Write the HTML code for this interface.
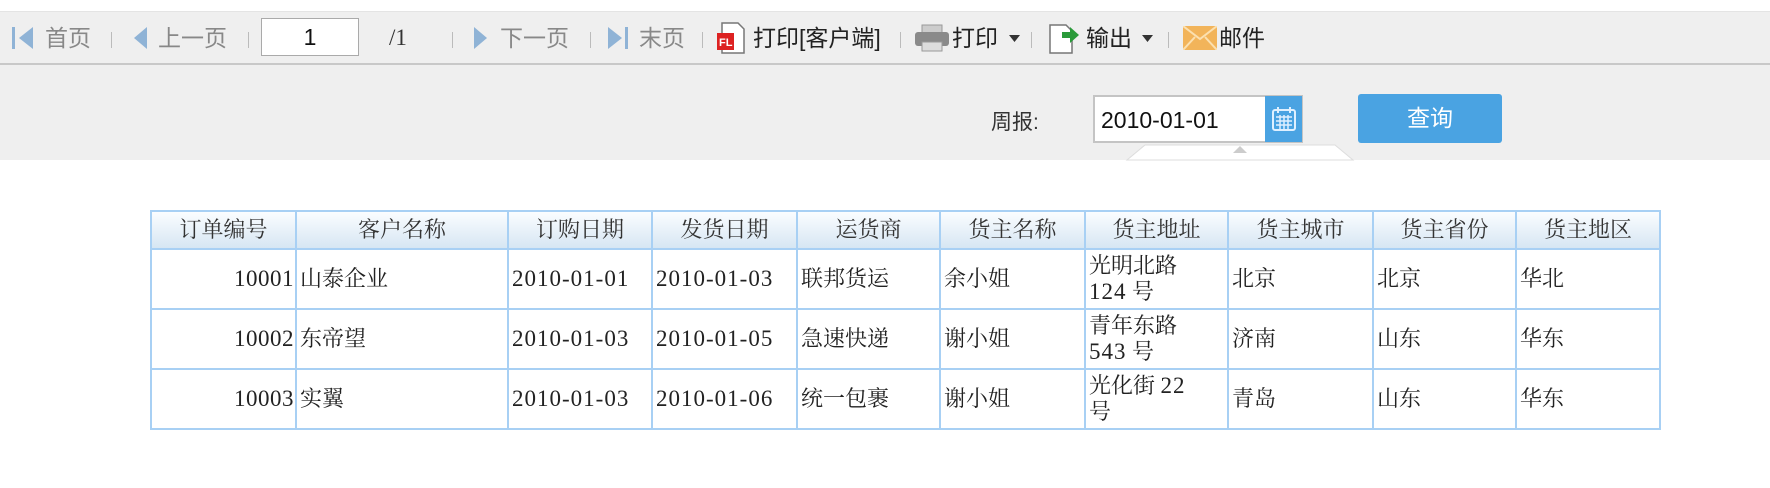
<!DOCTYPE html>
<html><head><meta charset="utf-8">
<style>
*{margin:0;padding:0;box-sizing:border-box}
body{width:1770px;height:488px;background:#fff;position:relative;overflow:hidden;font-family:"Liberation Sans","Noto Sans CJK SC",sans-serif}
.tb{position:absolute;left:0;top:11px;width:1770px;height:54px;background:#efefef;border-top:1px solid #e4e4e4;border-bottom:2px solid #c8c8c8}
.a{position:absolute;font-size:23px;line-height:24px;top:26px;color:#888}
.d{color:#222}
.sep{position:absolute;top:32px;width:1px;height:16px;background:#bbb}
.q{position:absolute;top:65px;left:0;width:1770px;height:95px;background:#efefef}
table{position:absolute;left:150px;top:210px;border-collapse:collapse;font-family:"Liberation Serif","Noto Serif CJK SC",serif;font-size:22px;color:#222;table-layout:fixed}
td,th{border:2px solid #a8d0f4;padding:0 3px;vertical-align:middle;line-height:26px}
th{height:38px;font-weight:normal;background:linear-gradient(#fbfdff,#d6e6f3);color:#333;text-align:center}
td{height:60px;text-align:left}
td.r{text-align:right;padding-right:1px}
.m{font-family:"Liberation Serif",serif;font-size:23px;letter-spacing:1px}
td.r .m{letter-spacing:0.5px}
</style></head><body>
<div class="tb"></div>
<svg style="position:absolute;left:11px;top:26px" width="30" height="24"><rect x="1" y="1" width="3" height="22" fill="#8fb3d6"/><polygon points="22,1 8,12 22,23" fill="#8fb3d6"/></svg>
<div class="a" style="left:45px">首页</div>
<div class="sep" style="left:111px"></div>
<svg style="position:absolute;left:133px;top:26px" width="20" height="24"><polygon points="14,1 1,12 14,23" fill="#8fb3d6"/></svg>
<div class="a" style="left:158px">上一页</div>
<div class="sep" style="left:248px"></div>
<div style="position:absolute;left:261px;top:18px;width:98px;height:38px;background:#fff;border:1px solid #aaa;font-size:23px;text-align:center;line-height:36px;color:#111">1</div>
<div class="a d" style="left:389px;font-family:'Liberation Serif',serif;color:#333">/1</div>
<div class="sep" style="left:452px"></div>
<svg style="position:absolute;left:472px;top:26px" width="20" height="24"><polygon points="2,1 15,12 2,23" fill="#8fb3d6"/></svg>
<div class="a" style="left:500px">下一页</div>
<div class="sep" style="left:590px"></div>
<svg style="position:absolute;left:607px;top:26px" width="28" height="24"><polygon points="1,1 15,12 1,23" fill="#8fb3d6"/><rect x="18" y="1" width="3" height="22" fill="#8fb3d6"/></svg>
<div class="a" style="left:639px">末页</div>
<div class="sep" style="left:702px"></div>
<svg style="position:absolute;left:716px;top:22px" width="30" height="32"><path d="M6 1h16l6 6v24H6z" fill="#fff" stroke="#777" stroke-width="1.5"/><rect x="1" y="11" width="17" height="17" fill="#d22"/><text x="3" y="24" font-size="11" font-family="Liberation Sans" font-weight="bold" fill="#fff">FL</text></svg>
<div class="a d" style="left:753px">打印[客户端]</div>
<div class="sep" style="left:900px"></div>
<svg style="position:absolute;left:914px;top:24px" width="36" height="28"><rect x="8" y="1" width="20" height="8" fill="#ccc" stroke="#999"/><rect x="1" y="8" width="34" height="14" rx="3" fill="#8a8a8a"/><rect x="8" y="18" width="20" height="9" fill="#ddd" stroke="#999"/></svg>
<div class="a d" style="left:952px">打印</div>
<svg style="position:absolute;left:1009px;top:35px" width="12" height="8"><polygon points="0,0 11,0 5.5,7" fill="#333"/></svg>
<div class="sep" style="left:1031px"></div>
<svg style="position:absolute;left:1048px;top:22px" width="34" height="32"><path d="M2 3h16l6 6v22H2z" fill="#fff" stroke="#777" stroke-width="1.5"/><path d="M14 10h8V5l9 8-9 8v-5h-8z" fill="#2a9a3a"/></svg>
<div class="a d" style="left:1086px">输出</div>
<svg style="position:absolute;left:1142px;top:35px" width="12" height="8"><polygon points="0,0 11,0 5.5,7" fill="#333"/></svg>
<div class="sep" style="left:1168px"></div>
<svg style="position:absolute;left:1183px;top:26px" width="34" height="24"><rect x="0" y="0" width="34" height="24" fill="#f2b45a"/><path d="M0 0l17 13L34 0M0 24l12-13M34 24L22 11" stroke="#fbe0b0" stroke-width="2" fill="none"/></svg>
<div class="a d" style="left:1219px">邮件</div>

<div class="q"></div>
<div style="position:absolute;left:991px;top:106px;font-size:21px;color:#333">周报:</div>
<div style="position:absolute;left:1093px;top:95px;width:210px;height:48px;background:#fff;border:2px solid #c4c4c4"></div>
<div style="position:absolute;left:1101px;top:107px;font-size:23px;color:#111">2010-01-01</div>
<div style="position:absolute;left:1265px;top:96px;width:37px;height:46px;background:#4aa3e2"></div>
<svg style="position:absolute;left:1271px;top:106px" width="26" height="26"><rect x="2" y="4" width="22" height="20" rx="2" fill="none" stroke="#dff0ff" stroke-width="2"/><path d="M7 1v6M19 1v6" stroke="#dff0ff" stroke-width="2"/><path d="M5 11h16M5 15h16M5 19h16M9 9v14M13 9v14M17 9v14" stroke="#dff0ff" stroke-width="1.5"/></svg>
<svg style="position:absolute;left:1125px;top:143px" width="230" height="18"><polygon points="20,2 210,2 228,17 2,17" fill="#fff" stroke="#ddd"/><polygon points="108,10 115,3 122,10" fill="#ccc"/></svg>
<div style="position:absolute;left:1358px;top:94px;width:144px;height:49px;background:#4aa3e2;border-radius:3px;color:#fff;font-size:23px;text-align:center;line-height:49px">查询</div>

<table>
<colgroup><col style="width:145px"><col style="width:212px"><col style="width:144px"><col style="width:145px"><col style="width:143px"><col style="width:145px"><col style="width:143px"><col style="width:145px"><col style="width:143px"><col style="width:144px"></colgroup>
<tr><th>订单编号</th><th>客户名称</th><th>订购日期</th><th>发货日期</th><th>运货商</th><th>货主名称</th><th>货主地址</th><th>货主城市</th><th>货主省份</th><th>货主地区</th></tr>
<tr><td class="r"><span class="m">10001</span></td><td>山泰企业</td><td><span class="m">2010-01-01</span></td><td><span class="m">2010-01-03</span></td><td>联邦货运</td><td>余小姐</td><td>光明北路<br><span class="m">124</span> 号</td><td>北京</td><td>北京</td><td>华北</td></tr>
<tr><td class="r"><span class="m">10002</span></td><td>东帝望</td><td><span class="m">2010-01-03</span></td><td><span class="m">2010-01-05</span></td><td>急速快递</td><td>谢小姐</td><td>青年东路<br><span class="m">543</span> 号</td><td>济南</td><td>山东</td><td>华东</td></tr>
<tr><td class="r"><span class="m">10003</span></td><td>实翼</td><td><span class="m">2010-01-03</span></td><td><span class="m">2010-01-06</span></td><td>统一包裹</td><td>谢小姐</td><td>光化街 <span class="m">22</span><br>号</td><td>青岛</td><td>山东</td><td>华东</td></tr>
</table>
</body></html>
